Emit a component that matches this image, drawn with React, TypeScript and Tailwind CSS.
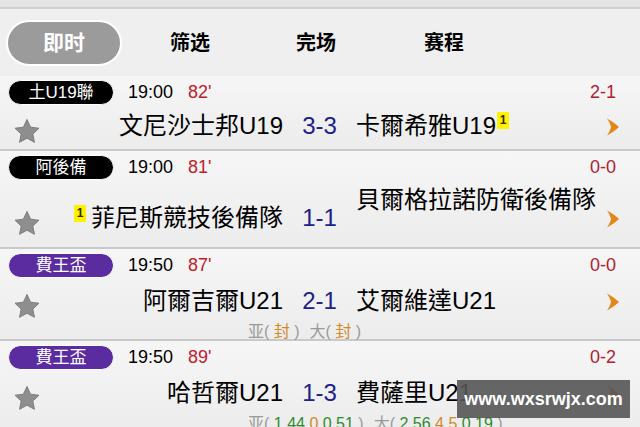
import React from 'react';

const FONT = { fontFamily: '"Liberation Sans", "Noto Sans CJK TC", "Noto Sans CJK SC", sans-serif' };

type Odds = { label: string; a?: string; b?: string; c?: string };

interface Match {
  league: string;
  leagueTone: 'black' | 'purple';
  time: string;
  minute: string;
  half: string;
  home: string;
  away: string;
  score: string;
  homeCard?: boolean;
  awayCard?: boolean;
  height: string;
  teamsPad: string;
  awayLift?: boolean;
  odds?: [Odds, Odds];
}

const matches: Match[] = [
  {
    league: '土U19聯',
    leagueTone: 'black',
    time: '19:00',
    minute: "82'",
    half: '2-1',
    home: '文尼沙士邦U19',
    away: '卡爾希雅U19',
    score: '3-3',
    awayCard: true,
    height: 'h-[75px]',
    teamsPad: 'pt-0',
  },
  {
    league: '阿後備',
    leagueTone: 'black',
    time: '19:00',
    minute: "81'",
    half: '0-0',
    home: '菲尼斯競技後備隊',
    away: '貝爾格拉諾防衛後備隊',
    score: '1-1',
    homeCard: true,
    height: 'h-[98px]',
    teamsPad: 'pt-[17px]',
    awayLift: true,
  },
  {
    league: '費王盃',
    leagueTone: 'purple',
    time: '19:50',
    minute: "87'",
    half: '0-0',
    home: '阿爾吉爾U21',
    away: '艾爾維達U21',
    score: '2-1',
    height: 'h-[92px]',
    teamsPad: 'pt-[2px]',
    odds: [{ label: '亚' }, { label: '大' }],
  },
  {
    league: '費王盃',
    leagueTone: 'purple',
    time: '19:50',
    minute: "89'",
    half: '0-2',
    home: '哈哲爾U21',
    away: '費薩里U21',
    score: '1-3',
    height: 'h-[92px]',
    teamsPad: 'pt-[2px]',
    odds: [
      { label: '亚', a: '1.44', b: '0', c: '0.51' },
      { label: '大', a: '2.56', b: '4.5', c: '0.19' },
    ],
  },
];

const Star = () => (
  <svg width="28" height="27" viewBox="0 0 24 23">
    <path
      d="M12 1.2l3.1 6.6 7.2.9-5.3 5 1.4 7.1L12 17.3l-6.4 3.5L7 13.7l-5.3-5 7.2-.9z"
      fill="#8e8e8e"
      stroke="#7a7a7a"
      strokeWidth="0.8"
      strokeLinejoin="round"
    />
  </svg>
);

const Chevron = () => (
  <svg width="16" height="20" viewBox="0 0 16 20">
    <path d="M2 1.5c4.6 2.4 8.8 5.3 12 8.5-3.2 3.2-7.4 6.1-12 8.5 2-2.9 3.4-5.7 4-8.5-.6-2.8-2-5.6-4-8.5z" fill="#e38818" />
  </svg>
);

const CardBadge = () => (
  <span className="inline-flex items-center justify-center bg-[#fff200] text-[12px] font-bold leading-none text-[#3a2a00] w-[12px] h-[17px]">
    1
  </span>
);

const OddsBlock = ({ o }: { o: Odds }) => (
  <span className="text-[16px] text-[#9a9a9a] whitespace-nowrap">
    {o.label}(
    {o.a ? (
      <>
        <span className="text-[#2e8b2e]"> {o.a} </span>
        <span className="text-[#d08a2a]">{o.b} </span>
        <span className="text-[#2e8b2e]">{o.c}</span>
        <span> )</span>
      </>
    ) : (
      <>
        <span className="text-[#d08a2a]"> 封 </span>)
      </>
    )}
  </span>
);

const MatchRow = ({ m }: { m: Match }) => (
  <div className={`relative ${m.height} bg-gradient-to-b from-[#f6f6f6] to-[#ececec] border-b-2 border-[#c9c9c9]`}>
    <div className="flex items-center pl-[8px] pr-[24px] pt-[3px]">
      <span
        className={`w-[106px] h-[25px] rounded-full border border-white flex items-center justify-center text-white text-[17px] ${
          m.leagueTone === 'black' ? 'bg-black' : 'bg-[#5a2ca0]'
        }`}
      >
        {m.league}
      </span>
      <span className="ml-[14px] text-[18px] text-black">{m.time}</span>
      <span className="ml-[15px] text-[18px] text-[#c0202a]">{m.minute}</span>
      <span className="ml-auto text-[18px] text-[#b02030]">{m.half}</span>
    </div>
    <div className={`flex items-center ${m.teamsPad}`}>
      <div className="w-[52px] pl-[13px] pt-[12px] flex">
        <Star />
      </div>
      <div className="w-[231px] flex items-start justify-end text-[24px] text-black whitespace-nowrap">
        {m.homeCard && (
          <span className="mr-[5px] mt-[5px] flex">
            <CardBadge />
          </span>
        )}
        {m.home}
      </div>
      <div className="w-[73px] text-center text-[24px] text-[#20208a]">{m.score}</div>
      <div
        className={`flex-1 flex items-start text-[24px] text-black whitespace-nowrap ${m.awayLift ? '-mt-[36px]' : ''}`}
      >
        {m.away}
        {m.awayCard && (
          <span className="ml-[1px] mt-[4px] flex">
            <CardBadge />
          </span>
        )}
      </div>
      <div className="w-[36px] flex justify-start pl-[1px] pt-[2px]">
        <Chevron />
      </div>
    </div>
    {m.odds && (
      <div className="flex items-center gap-[10px] pl-[248px]">
        <OddsBlock o={m.odds[0]} />
        <OddsBlock o={m.odds[1]} />
      </div>
    )}
  </div>
);

export default function App() {
  return (
    <div className="relative w-[640px] h-[427px] overflow-hidden bg-[#efefef]" style={FONT}>
      <div className="h-[9px] bg-[#e4e4e4] border-b-2 border-[#cfcfcf]" />
      <div className="h-[67px] flex items-center pl-[6px] bg-[#efefef]">
        <div className="w-[116px] h-[46px] rounded-full bg-[#9b9b9b] border-2 border-white flex items-center justify-center text-white text-[21px] font-bold">
          即时
        </div>
        <div className="ml-[48px] text-[20px] font-bold text-black">筛选</div>
        <div className="ml-[86px] text-[20px] font-bold text-black">完场</div>
        <div className="ml-[88px] text-[20px] font-bold text-black">赛程</div>
      </div>
      {matches.map((m, i) => (
        <MatchRow key={i} m={m} />
      ))}
      <div className="absolute left-[457px] top-[380px] w-[173px] h-[38px] bg-[#555555]/90 flex items-center justify-center text-white font-bold text-[18px]">
        www.wxsrwjx.com
      </div>
    </div>
  );
}
